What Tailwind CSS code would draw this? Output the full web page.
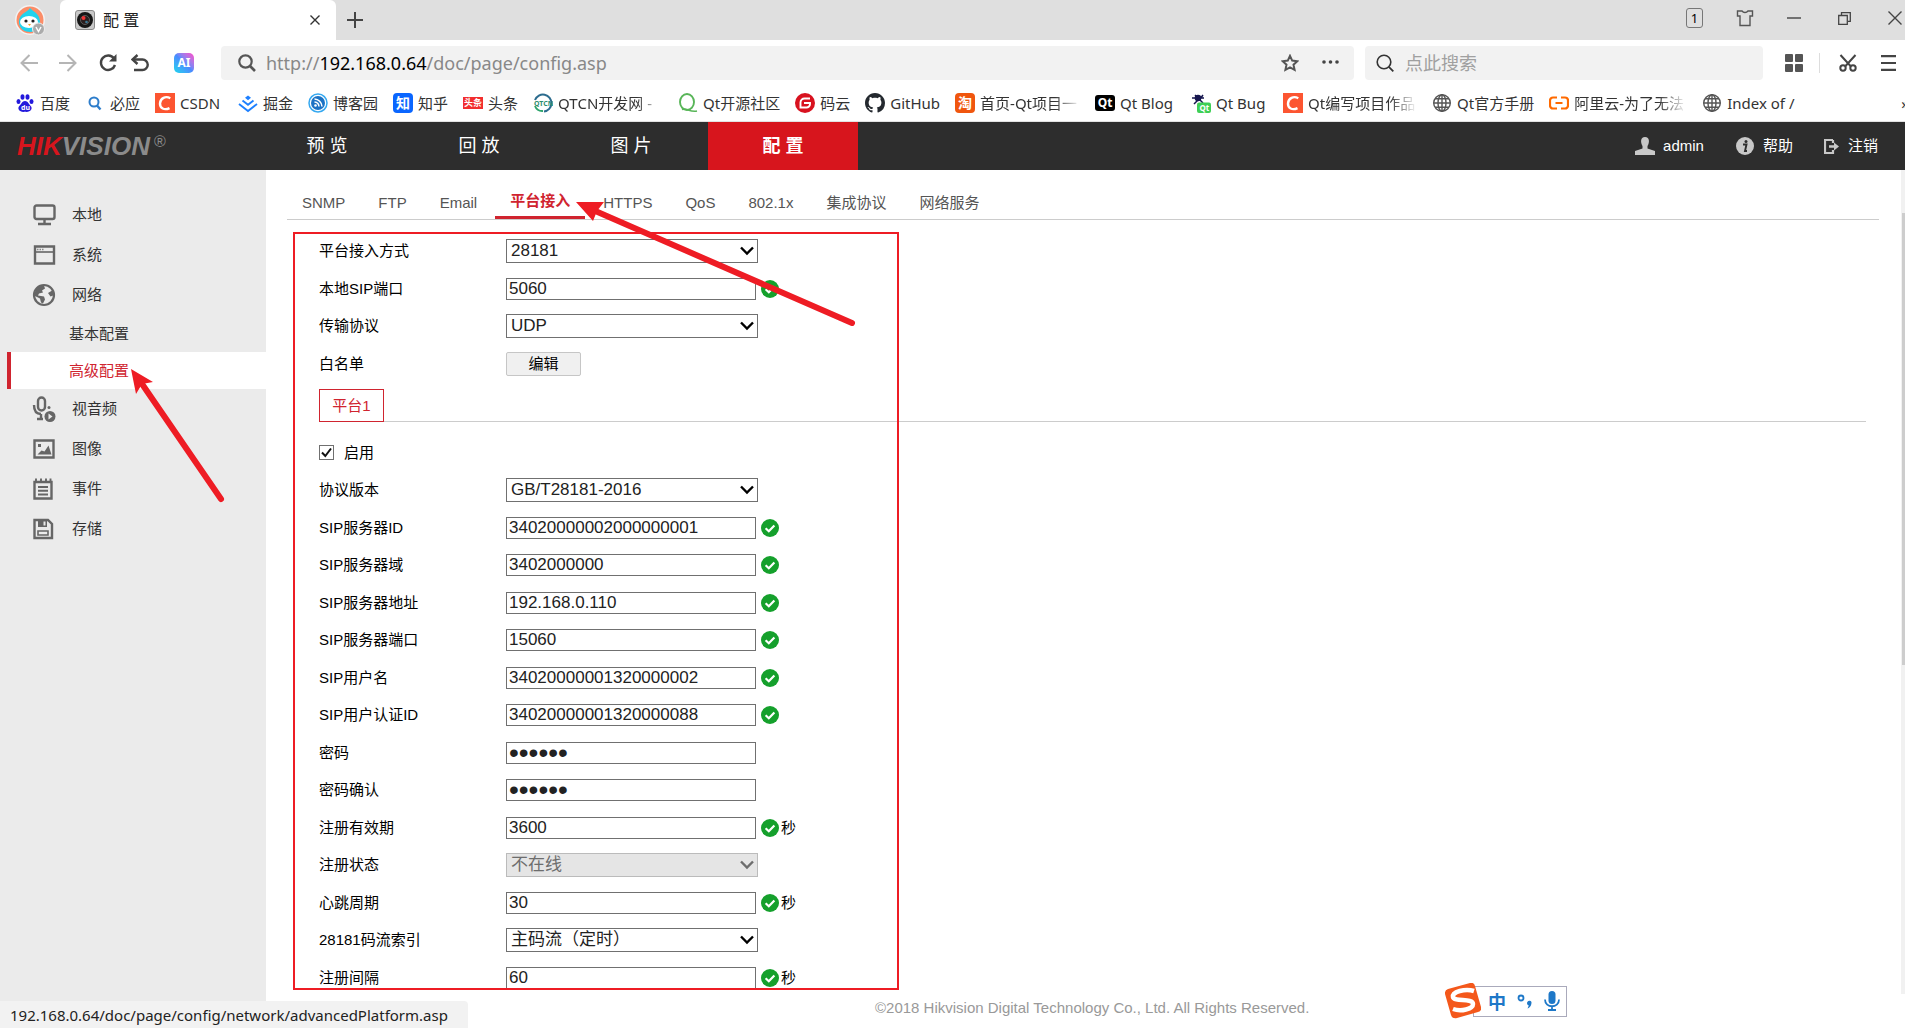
<!DOCTYPE html>
<html lang="zh-CN">
<head>
<meta charset="utf-8">
<title>配 置</title>
<script src="https://cdn.jsdelivr.net/npm/@tailwindcss/browser@4"></script>
</head>
<body class="relative flex min-h-screen flex-col overflow-x-hidden bg-white font-['Liberation_Sans','Noto_Sans_CJK_SC',sans-serif] text-[15px] leading-5 text-black">

<svg class="hidden" aria-hidden="true">
  <symbol id="ok" viewBox="0 0 18 18"><circle cx="9" cy="9" r="9" fill="#15a02c"/><path d="M4.6 9.2l3.2 3 5.6-5.8" fill="none" stroke="#fff" stroke-width="2.2"/></symbol>
  <symbol id="chev" viewBox="0 0 14 10"><path d="M1 1.5l6 6 6-6" fill="none" stroke="currentColor" stroke-width="2.4"/></symbol>
  <symbol id="globe" viewBox="0 0 20 20"><g fill="none" stroke="#555" stroke-width="1.4"><circle cx="10" cy="10" r="8.3"/><ellipse cx="10" cy="10" rx="4" ry="8.3"/><path d="M10 1.7v16.6M1.7 10h16.6M3 5.8h14M3 14.2h14"/></g></symbol>
  <symbol id="csdn" viewBox="0 0 20 20"><path fill="#fc5531" d="M0 0h20v20H0z"/><path d="M15.3 5.2C10.500 2.700 5.500 5 5 10.300c-.3 5 4.300 7.300 9.500 4.800" fill="none" stroke="#fff" stroke-width="2.400"/></symbol>
</svg>

<header class="font-['Noto_Sans','Noto_Sans_CJK_SC',sans-serif]">
  <!-- Tab strip -->
  <div class="flex h-10 items-center bg-[#dfdfdf]">
    <div class="flex w-15 shrink-0 justify-center">
      <svg class="size-8" viewBox="0 0 32 32"><circle cx="16" cy="16" r="15" fill="#f3f3f3"/><circle cx="16" cy="16" r="13.500" fill="#fb8d68"/><path d="M16 4c2 3 10 5 10 14 0 7-5 10-10 10S5 25 5 18C5 9 13 9 16 4z" fill="#21d3ee"/><ellipse cx="15" cy="18" rx="9" ry="6" fill="#fff"/><circle cx="12" cy="17" r="1.600" fill="#222"/><circle cx="19" cy="17" r="1.600" fill="#222"/><path d="M14 20l1.500 2 1.500-2z" fill="#f6a32a"/><circle cx="24.500" cy="25" r="6" fill="#ababab" stroke="#eee"/><path d="M22 23l2.500 4.500L27 23" fill="none" stroke="#fff" stroke-width="1.500"/></svg>
    </div>
    <div class="flex h-10 w-69 items-center rounded-t-md bg-white pl-[15px] pr-4">
      <svg class="size-5" viewBox="0 0 20 20"><rect x=".5" y=".5" width="19" height="19" rx="2.500" fill="#c9c9c9" stroke="#8a8a8a"/><circle cx="10" cy="10" r="8" fill="#151515"/><circle cx="10" cy="10" r="4.500" fill="#2b1e1e" stroke="#5a5a5a"/><circle cx="8.500" cy="8" r="2" fill="#e33"/><circle cx="11.500" cy="12" r="1.300" fill="#3a7a96"/></svg>
      <span class="ml-2 grow text-[16px] text-[#222]">配 置</span>
      <button aria-label="关闭标签"><svg class="size-[10px]" viewBox="0 0 10 10"><path d="M.5.5l9 9M9.500.5l-9 9" stroke="#333" stroke-width="1.400"/></svg></button>
    </div>
    <button class="ml-[11px]" aria-label="新标签"><svg class="size-4" viewBox="0 0 16 16"><path d="M8 0v16M0 8h16" stroke="#444" stroke-width="2"/></svg></button>
    <div class="ml-auto flex items-center gap-[33px] pb-1 pr-[3px]">
      <span class="flex h-5 w-[17px] items-center justify-center rounded-[3px] border border-[#777] text-[13px] text-black">1</span>
      <button aria-label="皮肤"><svg class="size-[18px]" viewBox="0 0 18 18"><path d="M6 2c1.500 2 4.500 2 6 0h4.500v5H14v9.500H4V7H1.500V2z" fill="none" stroke="#555" stroke-width="1.400"/></svg></button>
      <button aria-label="最小化"><svg class="size-[14px]" viewBox="0 0 14 14"><path d="M0 7h14" stroke="#444" stroke-width="1.400"/></svg></button>
      <button class="pl-1" aria-label="还原"><svg class="size-[13px]" viewBox="0 0 13 13"><path d="M3.500 3V.7h8.800v8.600H10M.7 3.500h8.600v8.800H.7z" fill="none" stroke="#444" stroke-width="1.300"/></svg></button>
      <button class="pl-1" aria-label="关闭"><svg class="size-[14px]" viewBox="0 0 14 14"><path d="M.5.5l13 13M13.500.5l-13 13" stroke="#444" stroke-width="1.400"/></svg></button>
    </div>
  </div>

  <!-- Address bar -->
  <div class="flex h-[45px] items-center pl-5 pr-[9px] text-[18px]">
    <button aria-label="后退"><svg class="size-[18px]" viewBox="0 0 18 18"><path d="M9.500 1L1.500 9l8 8M1.500 9H18" fill="none" stroke="#b5b5b5" stroke-width="2"/></svg></button>
    <button class="ml-[21px]" aria-label="前进"><svg class="size-[18px]" viewBox="0 0 18 18"><path d="M8.500 1l8 8-8 8M16.500 9H0" fill="none" stroke="#b5b5b5" stroke-width="2"/></svg></button>
    <button class="ml-[22px]" aria-label="刷新"><svg class="size-[18px]" viewBox="0 0 18 18"><path d="M15 4.500A7.200 7.200 0 1 0 16 11" fill="none" stroke="#444" stroke-width="2.400"/><path d="M17.500 0v7.500H10z" fill="#444"/></svg></button>
    <button class="ml-[14px]" aria-label="撤销"><svg class="size-[18px]" viewBox="0 0 18 18"><path d="M3 5.500h8.500a5 5 0 0 1 0 10.500H3" fill="none" stroke="#444" stroke-width="2.400"/><path d="M6.500 1L1.500 5.500l5 4.500" fill="none" stroke="#444" stroke-width="2.400"/></svg></button>
    <span class="ml-[25px] flex size-5 shrink-0 items-center justify-center rounded-[5px] bg-linear-to-bl from-[#ff3cc8] via-[#4a8bff] to-[#12d6ec] text-[12px] font-bold text-white">AI</span>
    <label class="ml-[27px] flex h-[34px] grow items-center rounded bg-[#f2f2f2] pl-[17px] pr-[15px] text-[#888]">
      <svg class="size-[18px] shrink-0" viewBox="0 0 18 18"><circle cx="7.500" cy="7.500" r="6.200" fill="none" stroke="#555" stroke-width="2.200"/><path d="M12 12l5 5" stroke="#555" stroke-width="2.600"/></svg>
      <span class="ml-[10px] grow">http://<span class="text-black">192.168.0.64</span>/doc/page/config.asp</span>
      <svg class="size-[18px] shrink-0" viewBox="0 0 18 18"><path d="M9 1.800l2.200 4.800 5.200.6-3.900 3.500 1.100 5.200L9 13.300l-4.600 2.600 1.100-5.200L1.600 7.200l5.200-.6z" fill="none" stroke="#555" stroke-width="2"/></svg>
      <svg class="ml-[23px] h-[18px] w-[17px] shrink-0" viewBox="0 0 17 18"><g fill="#444"><circle cx="2" cy="8" r="1.800"/><circle cx="8.500" cy="8" r="1.800"/><circle cx="15" cy="8" r="1.800"/></g></svg>
    </label>
    <label class="ml-[11px] flex h-[34px] w-[398px] items-center rounded bg-[#f2f2f2] pl-[11px]">
      <svg class="size-[18px] shrink-0" viewBox="0 0 18 18"><circle cx="8" cy="8" r="6.800" fill="none" stroke="#333" stroke-width="1.600"/><path d="M12.800 12.800l4.500 4.500" stroke="#333" stroke-width="1.800"/></svg>
      <input class="ml-[11px] w-full bg-transparent outline-none placeholder:text-[#a0a0a0]" placeholder="点此搜索" aria-label="搜索">
    </label>
    <button class="ml-[22px]" aria-label="应用"><svg class="size-[18px]" viewBox="0 0 18 18"><g fill="#555"><rect width="8" height="8" rx="1"/><rect x="10" width="8" height="8" rx="1"/><rect y="10" width="8" height="8" rx="1"/><rect x="10" y="10" width="8" height="8" rx="1"/></g></svg></button>
    <span class="ml-4 h-5 w-px bg-[#ddd]"></span>
    <button class="ml-[19px]" aria-label="截图"><svg class="size-[18px]" viewBox="0 0 18 18"><g fill="none" stroke="#444" stroke-width="2"><path d="M1.500 1l10 11M16.500 1l-10 11"/><circle cx="4" cy="14" r="2.700"/><circle cx="14" cy="14" r="2.700"/></g></svg></button>
    <button class="ml-6" aria-label="菜单"><svg class="h-4 w-[15px]" viewBox="0 0 15 16"><path d="M0 1.200h15M0 8h15M0 14.800h15" stroke="#444" stroke-width="2.200"/></svg></button>
  </div>

  <!-- Bookmarks -->
  <nav class="flex h-[37px] items-center gap-[15px] overflow-hidden border-b border-[#e2e2e2] pl-[15px] text-[15px] whitespace-nowrap text-[#333] *:flex *:shrink-0 *:items-center *:gap-[5px]" aria-label="书签">
    <a href="#"><svg class="size-5" viewBox="0 0 20 20"><g fill="#2319dc"><ellipse cx="3.500" cy="8.500" rx="2" ry="2.600"/><ellipse cx="7.500" cy="4" rx="2" ry="2.800"/><ellipse cx="12.500" cy="4" rx="2" ry="2.800"/><ellipse cx="16.500" cy="8.500" rx="2" ry="2.600"/><path d="M10 8c3 0 3.500 3 5.500 4.800 3 3-.5 7-5.500 6-5 1-8.500-3-5.500-6C6.500 11 7 8 10 8z"/></g><text x="6" y="17" font-size="7" font-weight="bold" fill="#fff">du</text></svg>百度</a>
    <a href="#"><svg class="size-5" viewBox="0 0 20 20"><circle cx="9" cy="9" r="4.500" fill="none" stroke="#2d7dcb" stroke-width="2"/><path d="M12 12.500l3.500 4" stroke="#2d7dcb" stroke-width="2.400"/></svg>必应</a>
    <a href="#" class="w-[68px]"><svg class="size-5"><use href="#csdn"/></svg>CSDN</a>
    <a href="#"><svg class="size-5" viewBox="0 0 20 20"><path d="M10 2.500l3 2.300-3 2.400-3-2.400z" fill="#1e80ff"/><path d="M4.500 7.500L10 11.800l5.500-4.300M1 11l9 7 9-7" fill="none" stroke="#1e80ff" stroke-width="1.900"/></svg>掘金</a>
    <a href="#"><svg class="size-5" viewBox="0 0 20 20"><circle cx="10" cy="10" r="9" fill="#fff" stroke="#35a8f0" stroke-width="1.500"/><circle cx="10" cy="10" r="7" fill="#1b72c4"/><path d="M6.500 6a8 8 0 0 1 7.500 7.500M6.500 9a5 5 0 0 1 4.500 4.500" fill="none" stroke="#fff" stroke-width="1.500"/><circle cx="7.500" cy="12.500" r="1.300" fill="#fff"/></svg>博客园</a>
    <a href="#"><span class="flex size-5 items-center justify-center rounded bg-[#0a66ff] text-[14px] font-bold text-white">知</span>知乎</a>
    <a href="#"><span class="flex h-3 w-5 items-center justify-center bg-[#f22e2e] text-[9px] font-bold text-white">头条</span>头条</a>
    <a href="#"><svg class="size-5" viewBox="0 0 20 20"><path d="M2 7a8.500 8.500 0 1 1 9 11.500" fill="none" stroke="#2c6c8e" stroke-width="2"/><path d="M2 13a8 8 0 0 0 8 5" fill="none" stroke="#2ea46c" stroke-width="2"/><text x="1" y="13" font-size="7" font-weight="bold" fill="#2f8f6f">QTCN</text></svg><span class="w-[105px] [mask-image:linear-gradient(to_right,black_75%,transparent)]">QTCN开发网 -</span></a>
    <a href="#"><svg class="size-5" viewBox="0 0 20 20"><ellipse cx="9" cy="9" rx="7" ry="8" fill="none" stroke="#58b558" stroke-width="1.900"/><path d="M4 16.500c4-2 8 3 15 1.500" fill="none" stroke="#58b558" stroke-width="1.700"/></svg>Qt开源社区</a>
    <a href="#"><svg class="size-5" viewBox="0 0 20 20"><circle cx="10" cy="10" r="10" fill="#d8121f"/><path d="M15 5.500H9.500a4 4 0 0 0-4 4v5h6a3.500 3.500 0 0 0 3.500-3.500v-1H9" fill="none" stroke="#fff" stroke-width="1.900"/></svg>码云</a>
    <a href="#"><svg class="size-5" viewBox="0 0 16 16"><path fill="#24292f" d="M8 0C3.580 0 0 3.580 0 8c0 3.540 2.290 6.530 5.470 7.590.4.070.55-.17.55-.38 0-.19-.01-.82-.01-1.490-2.010.37-2.530-.49-2.690-.94-.09-.23-.48-.94-.82-1.130-.28-.15-.68-.52-.01-.53.63-.01 1.080.58 1.230.82.72 1.210 1.870.87 2.330.66.070-.52.28-.87.51-1.070-1.780-.2-3.640-.89-3.640-3.950 0-.87.31-1.590.82-2.150-.08-.2-.36-1.020.08-2.120 0 0 .67-.21 2.200.82.64-.18 1.320-.27 2-.27s1.360.09 2 .27c1.530-1.040 2.200-.82 2.200-.82.44 1.100.16 1.920.08 2.120.51.56.82 1.270.82 2.150 0 3.070-1.870 3.750-3.650 3.950.29.25.54.73.54 1.480 0 1.070-.01 1.930-.01 2.200 0 .21.15.46.55.38A8.010 8.010 0 0 0 16 8c0-4.420-3.580-8-8-8z"/></svg>GitHub</a>
    <a href="#"><span class="flex size-5 items-center justify-center rounded bg-[#f0560e] text-[14px] font-bold text-white">淘</span><span class="w-[100px] [mask-image:linear-gradient(to_right,black_75%,transparent)]">首页-Qt项目一</span></a>
    <a href="#" class="w-[81px]"><span class="flex h-4 w-5 items-center justify-center rounded-[3px] bg-black text-[12px] font-bold text-white">Qt</span>Qt Blog</a>
    <a href="#" class="w-[77px]"><svg class="size-5" viewBox="0 0 20 20"><g stroke="#16164f" stroke-width="1.500"><path d="M4 2l8 8M12 2l-3 4M1 5h12M3 11l4-4"/></g><circle cx="7" cy="5" r="3.300" fill="#16164f"/><rect x="6" y="9.500" width="14" height="10.500" rx="2" fill="#3ecf55"/><text x="8.500" y="17.500" font-size="8" font-weight="bold" fill="#fff">Qt</text></svg>Qt Bug</a>
    <a href="#"><svg class="size-5"><use href="#csdn"/></svg><span class="w-[109px] [mask-image:linear-gradient(to_right,black_75%,transparent)]">Qt编写项目作品</span></a>
    <a href="#"><svg class="size-5"><use href="#globe"/></svg>Qt官方手册</a>
    <a href="#"><svg class="size-5" viewBox="0 0 20 20"><path d="M8 4.500H4a3 3 0 0 0-3 3v5a3 3 0 0 0 3 3h4M12 4.500h4a3 3 0 0 1 3 3v5a3 3 0 0 1-3 3h-4M6.500 10h7" fill="none" stroke="#ff6a00" stroke-width="2.200"/></svg><span class="w-[113px] [mask-image:linear-gradient(to_right,black_75%,transparent)]">阿里云-为了无法</span></a>
    <a href="#"><svg class="size-5"><use href="#globe"/></svg>Index of /</a>
    <button class="ml-auto -mr-1" aria-label="更多书签">»</button>
  </nav>

  <!-- Product navigation -->
  <div class="flex h-12 items-center bg-[#2d2d2d] pr-[27px] font-['Liberation_Sans','Noto_Sans_CJK_SC',sans-serif] text-[15px] text-white">
    <a href="#" class="flex w-[252px] shrink-0 items-start pl-[17px] text-[26px] leading-7 font-bold text-[#8b8b8b] italic"><span class="text-[#d7151d]">HIK</span>VISION<span class="ml-1 text-[16px] leading-5 font-normal not-italic">®</span></a>
    <nav class="flex h-full gap-[2px] text-[18px] *:flex *:w-[150px] *:items-center *:justify-center">
      <a href="#">预 览</a><a href="#">回 放</a><a href="#">图 片</a><a href="#" class="bg-[#d7151d] font-bold">配 置</a>
    </nav>
    <div class="ml-auto flex items-center">
      <svg class="h-[18px] w-5" viewBox="0 0 20 18"><path d="M10 0c5 0 4.500 6 2.500 9v2.500L20 14v4H0v-4l7.500-2.500V9C5.500 6 5 0 10 0z" fill="#c8c8c8"/></svg>
      <span class="ml-2">admin</span>
      <a href="#" class="ml-8 flex items-center"><svg class="size-[18px]" viewBox="0 0 18 18"><circle cx="9" cy="9" r="9" fill="#c8c8c8"/><circle cx="10" cy="4.500" r="1.500" fill="#2d2d2d"/><path d="M7 7.500h3.500l-1.500 6.500h2" fill="none" stroke="#2d2d2d" stroke-width="1.900"/></svg><span class="ml-[9px]">帮助</span></a>
      <a href="#" class="ml-[31px] flex items-center"><svg class="size-[15px]" viewBox="0 0 15 15"><path d="M9 1H1v13h8v-3M9 4V1" fill="none" stroke="#c8c8c8" stroke-width="2.200"/><path d="M5 6.300h5V3.500l5 4-5 4V8.700H5z" fill="#c8c8c8"/></svg><span class="ml-[9px]">注销</span></a>
    </div>
  </div>
</header>

<div class="flex grow">
  <!-- Sidebar -->
  <aside class="w-[266px] shrink-0 bg-[#ebebeb] pt-[25px] text-[#333]">
    <nav class="flex flex-col">
      <a href="#" class="flex h-10 items-center gap-4 pl-8"><svg class="size-6" viewBox="0 0 24 24"><g fill="none" stroke="#666" stroke-width="2.400"><rect x="2.500" y="2.500" width="20" height="13.500" rx="2"/><path d="M12.500 16v5M6 21h13"/></g></svg>本地</a>
      <a href="#" class="flex h-10 items-center gap-4 pl-8"><svg class="size-6" viewBox="0 0 24 24"><path d="M3 3.500h19v17H3z" fill="none" stroke="#666" stroke-width="2.400"/><path d="M3 9h19" stroke="#666" stroke-width="1.600"/><path d="M5 6.400h7" stroke="#888" stroke-width="1.500" stroke-dasharray="1.500 1"/></svg>系统</a>
      <a href="#" class="flex h-10 items-center gap-4 pl-8"><svg class="size-6" viewBox="0 0 24 24"><circle cx="12" cy="12" r="10" fill="none" stroke="#666" stroke-width="2.200"/><path d="M3 9c2-5 5-7 9-6.500l1 3-3 2 1 2-4 1-1 2 6 1 1 3-2 4-2-1-1-4-5-2.500zM16 10l5-3 1.500 5-4 1.500z" fill="#666"/></svg>网络</a>
      <a href="#" class="flex h-[37px] items-center pl-[69px]">基本配置</a>
      <a href="#" class="ml-[7px] flex h-[37px] items-center border-l-4 border-[#d0242f] bg-white pl-[58px] text-[#d0242f]">高级配置</a>
      <a href="#" class="flex h-10 items-center gap-4 pl-8"><svg class="h-[26px] w-6" viewBox="0 0 24 26"><g fill="none" stroke="#666" stroke-width="2.400"><rect x="6" y="1.500" width="7" height="13" rx="3.500"/><path d="M2 9c0 6 2 9 7 9M9 18v5M5 23h6"/></g><circle cx="18" cy="20.500" r="5.500" fill="#666"/><path d="M16.500 17.500l4 3-4 3z" fill="#ebebeb"/><circle cx="17" cy="11.500" r="1.500" fill="#666"/></svg>视音频</a>
      <a href="#" class="flex h-10 items-center gap-4 pl-8"><svg class="size-6" viewBox="0 0 24 24"><path d="M2.500 3.500h19v17h-19z" fill="none" stroke="#666" stroke-width="2.400"/><path d="M5.500 17.500l4-4 3 1 4-6 3 9zM6 7h3v3H6z" fill="#666"/></svg>图像</a>
      <a href="#" class="flex h-10 items-center gap-4 pl-8"><svg class="size-6" viewBox="0 0 24 24"><path d="M2.500 5h17v16.500h-17z" fill="none" stroke="#666" stroke-width="2.400"/><path d="M6 10h10M6 13.700h10M6 17.500h10M4 1.500v4M9 1.500v4M14 1.500v4M18.500 1.500v4" fill="none" stroke="#666" stroke-width="1.900"/></svg>事件</a>
      <a href="#" class="flex h-10 items-center gap-4 pl-8"><svg class="size-6" viewBox="0 0 24 24"><path d="M2.500 3H16l4 4v14H2.500z" fill="none" stroke="#666" stroke-width="2.400"/><path d="M6 3h9v7H6z" fill="#666"/><path d="M11.500 4.500h2v4h-2z" fill="#ebebeb"/><path d="M6 14h10v4H6z" fill="none" stroke="#666" stroke-width="1.600"/></svg>存储</a>
    </nav>
  </aside>

  <!-- Settings -->
  <main class="relative flex min-w-0 grow flex-col pl-[21px]">
    <nav class="mr-[26px] flex h-[50px] gap-[3px] border-b border-[#ccc] text-[#555] *:flex *:items-center *:px-[15px] *:pt-4">
      <a href="#">SNMP</a><a href="#">FTP</a><a href="#">Email</a><a href="#" class="border-b-3 border-[#d0242f] font-bold text-[#d0242f]">平台接入</a><a href="#">HTTPS</a><a href="#">QoS</a><a href="#">802.1x</a><a href="#">集成协议</a><a href="#">网络服务</a>
    </nav>

    <form class="mr-[39px] pt-3 pl-8">
      <div class="*:flex *:h-[37px] *:items-center *:odd:h-[38px]">
        <div><label for="mode" class="w-[187px]">平台接入方式</label><div class="relative w-[252px]"><select id="mode" class="block h-6 w-full appearance-none border border-[#707070] bg-white pl-1 text-[17px] leading-5 text-[#222]"><option>28181</option></select><svg class="pointer-events-none absolute top-[7px] right-1 h-[10px] w-[14px]"><use href="#chev"/></svg></div></div>
        <div><label for="sip" class="w-[187px]">本地SIP端口</label><input id="sip" value="5060" class="h-[22px] w-[250px] border border-[#707070] bg-white px-[2px] text-[17px] leading-5 text-[#222]"><svg class="ml-[5px] size-[18px]"><use href="#ok"/></svg></div>
        <div><label for="proto" class="w-[187px]">传输协议</label><div class="relative w-[252px]"><select id="proto" class="block h-6 w-full appearance-none border border-[#707070] bg-white pl-1 text-[17px] leading-5 text-[#222]"><option>UDP</option></select><svg class="pointer-events-none absolute top-[7px] right-1 h-[10px] w-[14px]"><use href="#chev"/></svg></div></div>
        <div><span class="w-[187px]">白名单</span><button type="button" class="h-6 w-[75px] rounded-xs border border-[#c6c6c6] bg-[#f0f0f0]">编辑</button></div>
      </div>

      <div class="mt-[7px] flex border-b border-[#ccc]">
        <button type="button" class="-mb-px h-[33px] w-[65px] border border-[#d0242f] text-[#d0242f]">平台1</button>
      </div>

      <div class="pt-3 *:flex *:h-[37px] *:items-center *:even:h-[38px]">
        <div class="relative"><input id="enable" type="checkbox" checked class="size-[15px] appearance-none border border-[#707070] bg-white"><svg class="pointer-events-none absolute left-[2px] size-[11px]" viewBox="0 0 11 11"><path d="M1 5.500l3.300 3.500L10 1.500" fill="none" stroke="#111" stroke-width="2"/></svg><label for="enable" class="ml-[10px]">启用</label></div>
        <div><label for="ver" class="w-[187px]">协议版本</label><div class="relative w-[252px]"><select id="ver" class="block h-6 w-full appearance-none border border-[#707070] bg-white pl-1 text-[17px] leading-5 text-[#222]"><option>GB/T28181-2016</option></select><svg class="pointer-events-none absolute top-[7px] right-1 h-[10px] w-[14px]"><use href="#chev"/></svg></div></div>
        <div><label for="sid" class="w-[187px]">SIP服务器ID</label><input id="sid" value="34020000002000000001" class="h-[22px] w-[250px] border border-[#707070] bg-white px-[2px] text-[17px] leading-5 text-[#222]"><svg class="ml-[5px] size-[18px]"><use href="#ok"/></svg></div>
        <div><label for="sdom" class="w-[187px]">SIP服务器域</label><input id="sdom" value="3402000000" class="h-[22px] w-[250px] border border-[#707070] bg-white px-[2px] text-[17px] leading-5 text-[#222]"><svg class="ml-[5px] size-[18px]"><use href="#ok"/></svg></div>
        <div><label for="saddr" class="w-[187px]">SIP服务器地址</label><input id="saddr" value="192.168.0.110" class="h-[22px] w-[250px] border border-[#707070] bg-white px-[2px] text-[17px] leading-5 text-[#222]"><svg class="ml-[5px] size-[18px]"><use href="#ok"/></svg></div>
        <div><label for="sport" class="w-[187px]">SIP服务器端口</label><input id="sport" value="15060" class="h-[22px] w-[250px] border border-[#707070] bg-white px-[2px] text-[17px] leading-5 text-[#222]"><svg class="ml-[5px] size-[18px]"><use href="#ok"/></svg></div>
        <div><label for="suser" class="w-[187px]">SIP用户名</label><input id="suser" value="34020000001320000002" class="h-[22px] w-[250px] border border-[#707070] bg-white px-[2px] text-[17px] leading-5 text-[#222]"><svg class="ml-[5px] size-[18px]"><use href="#ok"/></svg></div>
        <div><label for="sauth" class="w-[187px]">SIP用户认证ID</label><input id="sauth" value="34020000001320000088" class="h-[22px] w-[250px] border border-[#707070] bg-white px-[2px] text-[17px] leading-5 text-[#222]"><svg class="ml-[5px] size-[18px]"><use href="#ok"/></svg></div>
        <div><label for="pw" class="w-[187px]">密码</label><input id="pw" type="password" value="abcdef" class="h-[22px] w-[250px] border border-[#707070] bg-white px-[2px] text-[28px] leading-5 text-[#222]"></div>
        <div><label for="pw2" class="w-[187px]">密码确认</label><input id="pw2" type="password" value="abcdef" class="h-[22px] w-[250px] border border-[#707070] bg-white px-[2px] text-[28px] leading-5 text-[#222]"></div>
        <div><label for="exp" class="w-[187px]">注册有效期</label><input id="exp" value="3600" class="h-[22px] w-[250px] border border-[#707070] bg-white px-[2px] text-[17px] leading-5 text-[#222]"><svg class="ml-[5px] size-[18px]"><use href="#ok"/></svg><span class="ml-[2px]">秒</span></div>
        <div><label for="state" class="w-[187px]">注册状态</label><div class="relative w-[252px] text-[#6d6d6d]"><select id="state" disabled class="block h-6 w-full appearance-none border border-[#bbb] bg-[#e5e5e5] pl-1 text-[17px] leading-5 opacity-100"><option>不在线</option></select><svg class="pointer-events-none absolute top-[7px] right-1 h-[10px] w-[14px]"><use href="#chev"/></svg></div></div>
        <div><label for="beat" class="w-[187px]">心跳周期</label><input id="beat" value="30" class="h-[22px] w-[250px] border border-[#707070] bg-white px-[2px] text-[17px] leading-5 text-[#222]"><svg class="ml-[5px] size-[18px]"><use href="#ok"/></svg><span class="ml-[2px]">秒</span></div>
        <div><label for="idx" class="w-[187px]">28181码流索引</label><div class="relative w-[252px]"><select id="idx" class="block h-6 w-full appearance-none border border-[#707070] bg-white pl-1 text-[17px] leading-5 text-[#222]"><option>主码流（定时）</option></select><svg class="pointer-events-none absolute top-[7px] right-1 h-[10px] w-[14px]"><use href="#chev"/></svg></div></div>
        <div><label for="gap" class="w-[187px]">注册间隔</label><input id="gap" value="60" class="h-[22px] w-[250px] border border-[#707070] bg-white px-[2px] text-[17px] leading-5 text-[#222]"><svg class="ml-[5px] size-[18px]"><use href="#ok"/></svg><span class="ml-[2px]">秒</span></div>
      </div>
    </form>

    <footer class="mr-[5px] pr-[6px] pl-[588px] text-[15px] leading-6 text-[#999]">©2018 Hikvision Digital Technology Co., Ltd. All Rights Reserved.</footer>

    <!-- Highlight frame over the form -->
    <div class="pointer-events-none absolute top-[62px] left-[27px] h-[758px] w-[606px] border-2 border-[#ee1c24]"></div>

    <!-- Page scrollbar -->
    <div class="absolute top-0 right-0 h-[824px] w-1 bg-[#f1f1f1] pt-[43px]"><div class="ml-px h-[452px] bg-[#cdcdcd]"></div></div>
  </main>
</div>

<!-- Pointer arrows -->
<svg class="pointer-events-none absolute top-0 left-0 h-[600px] w-[900px]" viewBox="0 0 900 600">
  <g stroke="#ee1c24" stroke-width="6" stroke-linecap="round"><path d="M852 323L593 210M221 499L140 381"/></g>
  <g fill="#ee1c24"><path d="M576 202l28 0-7 9-4 10z"/><path d="M131 369l22 13-11 2-6 10z"/></g>
</svg>

<!-- Input method bar -->
<div class="absolute right-[338px] bottom-[10px] flex h-[34px] items-center">
  <svg class="z-10 -mr-2 size-9" viewBox="0 0 36 36"><path d="M3 6L25 0q4-1 5 3l6 21q1 4-3 5L12 35q-5 1-6-3L0 11Q-.5 7 3 6z" fill="#f4581b"/><path d="M29 8C20 5 7 9 8 14c1 5 20 1 20 7 0 5-12 8-20 5" fill="none" stroke="#fff" stroke-width="4.500"/></svg>
  <div class="flex h-[31px] w-[94px] items-center gap-[11px] border border-[#aab] bg-white pl-[14px] font-['Noto_Sans_CJK_SC',sans-serif] text-[18px] font-bold text-[#1e78c8]">
    <span>中</span>
    <svg class="h-5 w-4" viewBox="0 0 16 20"><circle cx="4" cy="7" r="2.500" fill="none" stroke="#1e78c8" stroke-width="1.800"/><path d="M14.500 11c0 4-2 6-4 6.500l1.300-3A2.400 2.400 0 1 1 14.500 11z" fill="#1e78c8"/></svg>
    <svg class="h-5 w-4" viewBox="0 0 16 20"><rect x="4.500" y="0" width="7" height="13" rx="3.500" fill="#1e78c8"/><path d="M1 8.500c0 9 14 9 14 0M8 15v4M4 19h8" fill="none" stroke="#1e78c8" stroke-width="1.800"/></svg>
  </div>
</div>

<!-- Link target bubble -->
<div class="absolute bottom-0 left-0 h-[27px] rounded-tr bg-[#f2f2f2] pr-5 pl-[10px] font-['Noto_Sans',sans-serif] text-[15px] leading-7 text-[#222]">192.168.0.64/doc/page/config/network/advancedPlatform.asp</div>
</body>
</html>
